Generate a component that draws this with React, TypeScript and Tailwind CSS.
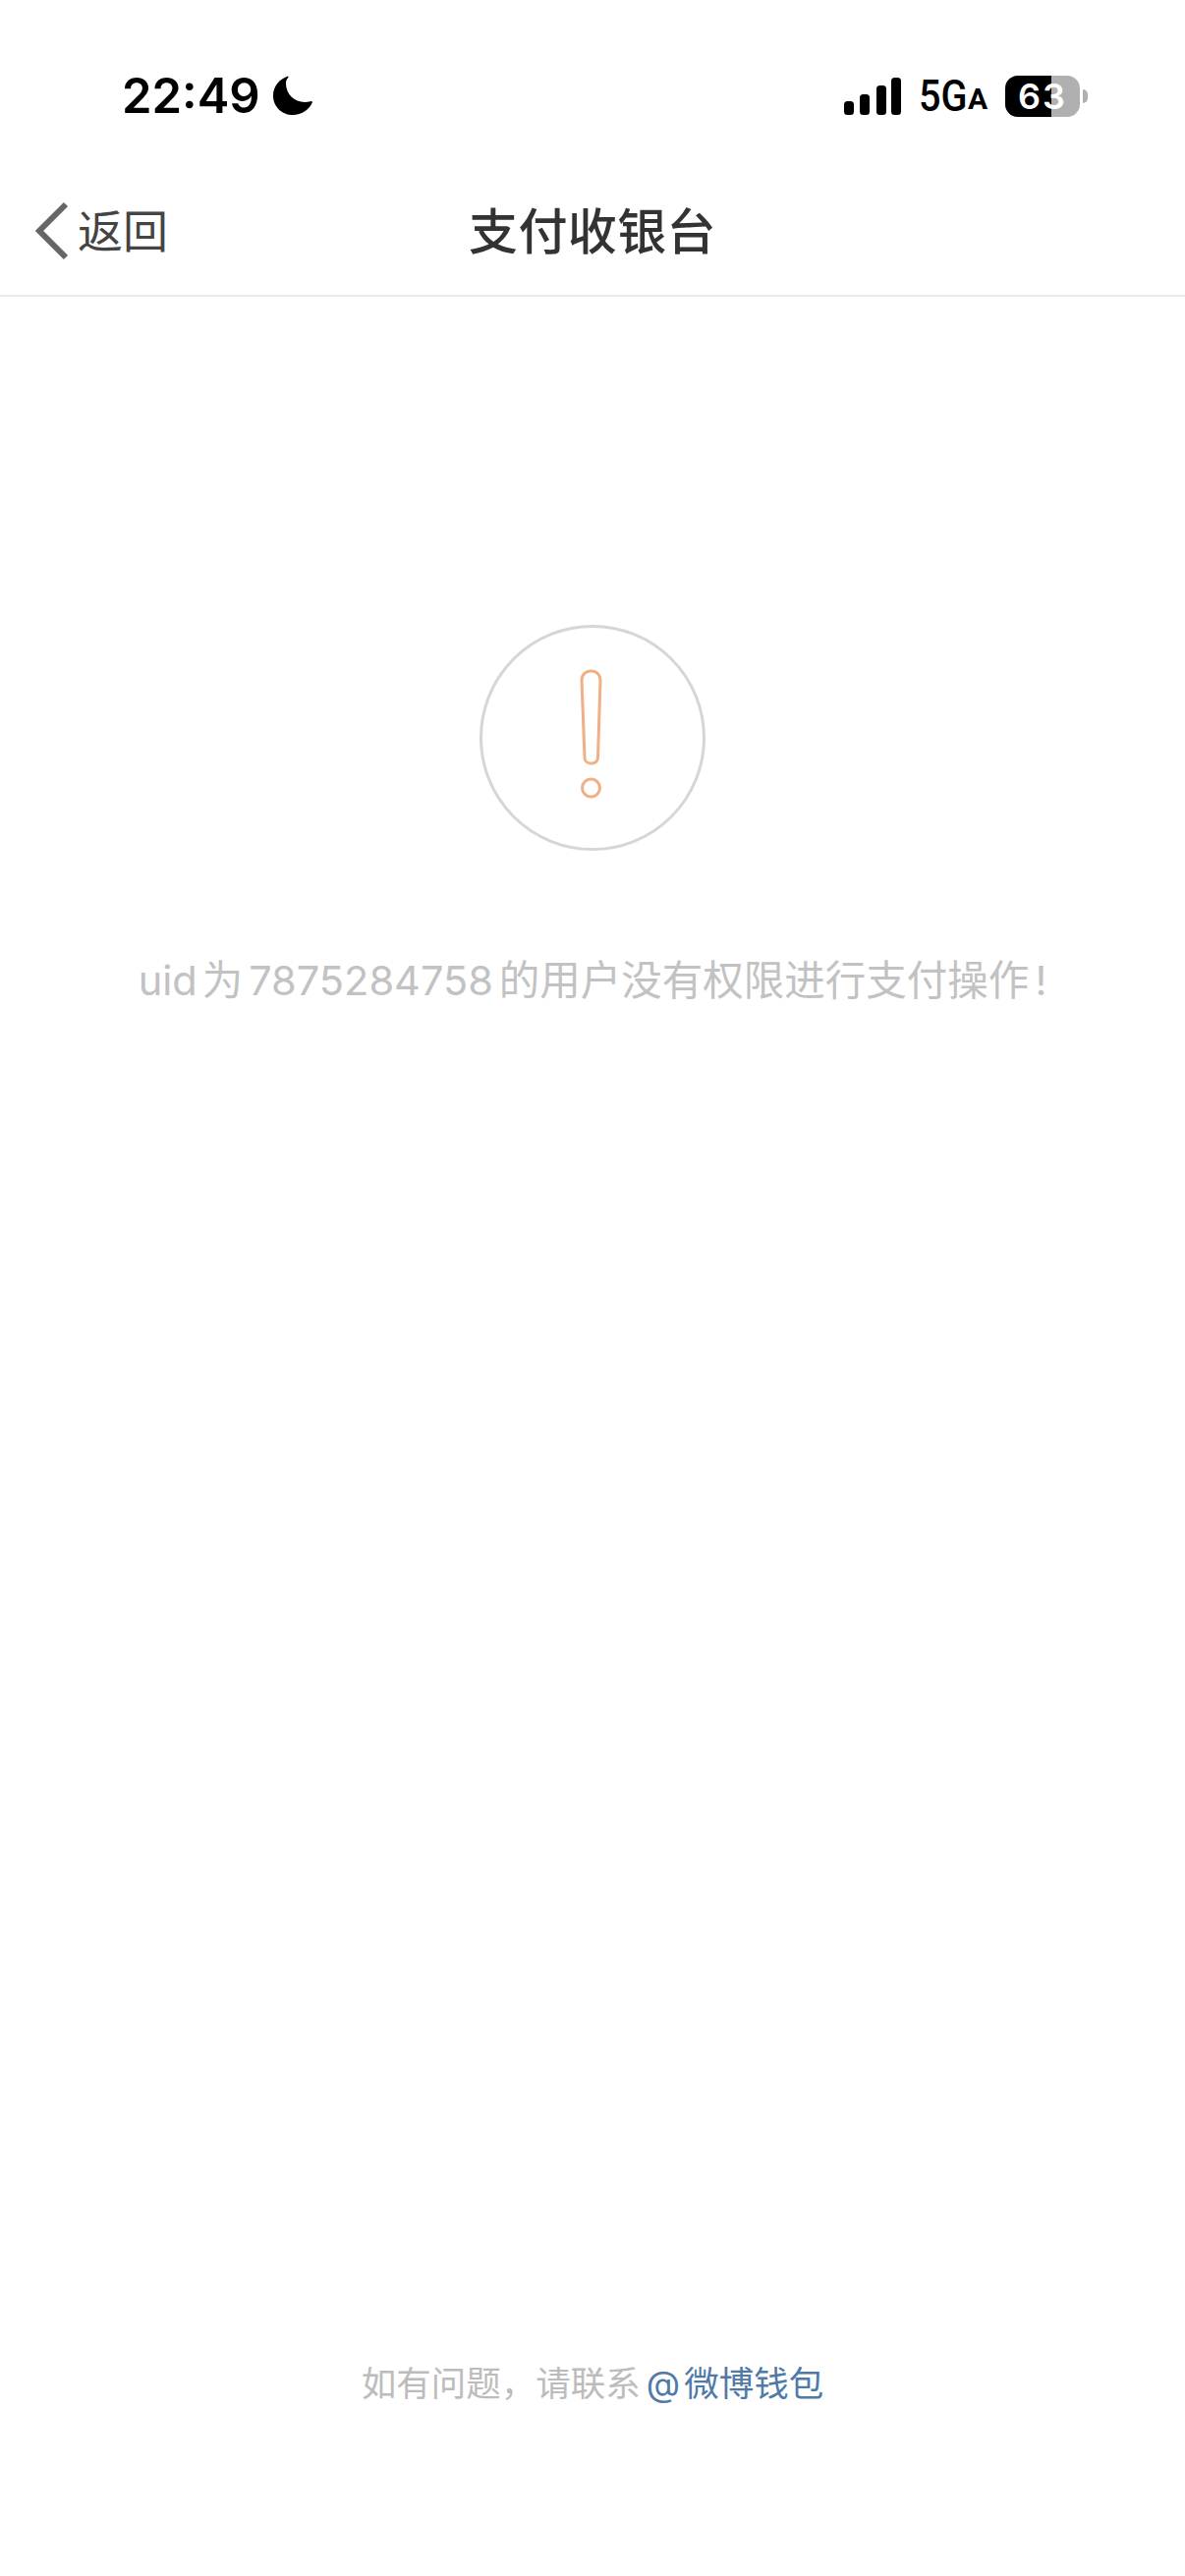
const cjk = '"Inter", "Noto Sans CJK SC", sans-serif';

function StatusBar() {
  return (
    <div className="flex h-[175px] items-start justify-between pt-[73px] pl-[124px] pr-[94px]">
      <div className="flex items-center gap-[12px]">
        <span className="text-[49px] leading-[50px] font-semibold text-black" style={{ fontFamily: cjk }}>22:49</span>
        <svg width="42" height="42" viewBox="0 0 42 42" className="mt-[-2px]">
          <path d="M16 1.5C6.8 4.8 1 12.3 1 21.4 1 32.5 10 41 21 41c8.8 0 16.2-4.8 20-13-.3-.8-1-1.1-2-.8-2 .6-4 .8-5.8.8C22.500 28 14 19.500 14 9c0-2.500.5-4.500 2.400-6 .3-.8 0-1.300-.4-1.500z" fill="#000" />
        </svg>
      </div>
      <div className="mr-[5px] flex items-center pt-[4px]">
        <svg width="58" height="38" viewBox="0 0 58 38" className="mr-[18px]">
          <rect x="0" y="24" width="10" height="14" rx="3.500" fill="#000" />
          <rect x="16" y="17" width="10" height="21" rx="3.500" fill="#000" />
          <rect x="33" y="8" width="10" height="30" rx="3.500" fill="#000" />
          <rect x="48" y="0" width="10" height="38" rx="3.500" fill="#000" />
        </svg>
        <div className="mr-[19px] flex w-[69px] items-end text-black" style={{ fontFamily: 'Roboto, sans-serif' }}>
          <span className="inline-block w-[50px] origin-left scale-x-[0.9] whitespace-nowrap text-[44px] leading-[38px] font-medium">5G</span>
          <span className="mb-[1px] text-[30px] leading-[30px] font-bold">A</span>
        </div>
        <div className="relative h-[42px] w-[76px] overflow-hidden rounded-[13px] bg-[#b0b0b0]">
          <div className="h-full w-[47px] bg-black" />
          <span className="absolute inset-0 flex items-center justify-center text-[36px] font-semibold leading-none tracking-[2px] text-white" style={{ fontFamily: cjk }}>63</span>
        </div>
        <div className="ml-[3px] h-[14px] w-[5px] rounded-r-full bg-[#b0b0b0]" />
      </div>
    </div>
  );
}

function NavBar() {
  return (
    <div className="relative flex h-[127px] items-center justify-center border-b-2 border-[#eaeaea] pb-[4px]">
      <div className="absolute left-[36px] top-[30px] flex items-center gap-[9px]">
        <svg width="34" height="60" viewBox="0 0 34 60">
          <path d="M31 3 4 30l27 27" fill="none" stroke="#666" strokeWidth="6" />
        </svg>
        <span className="text-[46px] leading-[60px] text-[#444]" style={{ fontFamily: cjk }}>返回</span>
      </div>
      <span className="text-[50px] leading-[60px] font-medium tracking-[0.4px] text-[#333]" style={{ fontFamily: cjk }}>支付收银台</span>
    </div>
  );
}

function WarningIcon() {
  return (
    <svg width="230" height="230" viewBox="0 0 230 230">
      <circle cx="115" cy="115" r="113.500" fill="none" stroke="#d6d6d6" strokeWidth="3" />
      <path d="M104 56c0-5 4-9 9-9h1c5 0 9 4 9 9l-2.500 79c0 3.500-3 6-6 6h-1.500c-3.500 0-6-2.500-6-6z" fill="none" stroke="#efb083" strokeWidth="3" />
      <circle cx="113.500" cy="166" r="9" fill="none" stroke="#efb083" strokeWidth="3" />
    </svg>
  );
}

export default function App() {
  return (
    <div className="flex h-[2622px] w-[1206px] flex-col bg-white" style={{ fontFamily: cjk }}>
      <StatusBar />
      <NavBar />
      <main className="flex flex-1 flex-col items-center pt-[334px]">
        <WarningIcon />
        <p className="mt-[104px] whitespace-nowrap text-[41.500px] leading-[56px] text-[#c2c2c2]">
          uid<span className="ml-[5px]">为</span><span className="mx-[6px]">7875284758</span>的用户没有权限进行支付操作<span className="ml-[6px]">!</span>
        </p>
      </main>
      <footer className="flex justify-center pb-[170px] text-[35.500px] leading-[50px]">
        <span className="text-[#bcbcbc]">如有问题，请联系</span>
        <span className="ml-[6px] text-[#4f7aa8]">@<span className="ml-[4px]">微博钱包</span></span>
      </footer>
    </div>
  );
}
